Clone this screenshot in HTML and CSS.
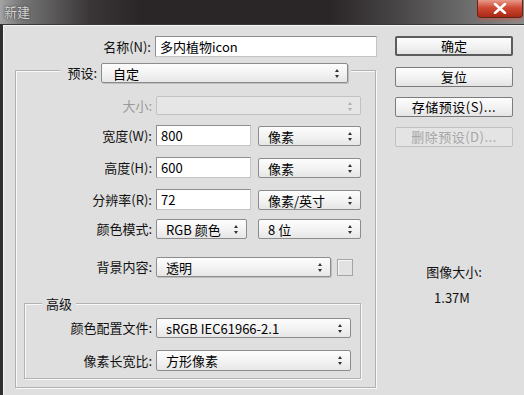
FILE: index.html
```html
<!DOCTYPE html>
<html lang="zh-CN">

<head>
    <meta charset="UTF-8">
    <title>新建</title>
    <link rel="stylesheet" href="styles.css">
</head>

<body>
    <div class="window">
        <div class="titlebar">
            <span class="title">新建</span>
            <span class="close-btn">
                <svg width="14" height="11" viewBox="0 0 14 11">
                    <path d="M2 1 L12 10 M12 1 L2 10" stroke="#fff" stroke-width="2.6" stroke-linecap="round" />
                </svg>
            </span>
        </div>
        <div class="dialog">
            <div class="left-col">
                <div class="name-row">
                    <label class="name-label">名称(N):</label>
                    <div class="input name-input">多内植物icon</div>
                </div>

                <div class="group">
                    <div class="preset-row">
                        <label class="preset-label">预设:</label>
                        <div class="select preset-select">自定<i class="arrows"></i></div>
                    </div>

                    <div class="row row-size">
                        <label class="label disabled">大小:</label>
                        <div class="select size-select is-disabled"><i class="arrows"></i></div>
                    </div>
                    <div class="row row-gap10">
                        <label class="label">宽度(W):</label>
                        <div class="input num-input">800</div>
                        <div class="select unit-select">像素<i class="arrows"></i></div>
                    </div>
                    <div class="row row-gap11">
                        <label class="label">高度(H):</label>
                        <div class="input num-input">600</div>
                        <div class="select unit-select">像素<i class="arrows"></i></div>
                    </div>
                    <div class="row row-gap11">
                        <label class="label">分辨率(R):</label>
                        <div class="input num-input res-input">72</div>
                        <div class="select unit-select">像素/英寸<i class="arrows"></i></div>
                    </div>
                    <div class="row row-gap9">
                        <label class="label">颜色模式:</label>
                        <div class="select mode-select">RGB&nbsp;颜色<i class="arrows"></i></div>
                        <div class="select unit-select bits-select">8&nbsp;位<i class="arrows"></i></div>
                    </div>
                    <div class="row row-bg">
                        <label class="label">背景内容:</label>
                        <div class="select bg-select">透明<i class="arrows"></i></div>
                        <div class="swatch"></div>
                    </div>

                    <div class="adv-group">
                        <div class="adv-title">高级</div>
                        <div class="row adv-row">
                            <label class="label adv-label">颜色配置文件:</label>
                            <div class="select adv-select">sRGB IEC61966-2.1<i class="arrows"></i></div>
                        </div>
                        <div class="row adv-row adv-row2">
                            <label class="label adv-label">像素长宽比:</label>
                            <div class="select adv-select">方形像素<i class="arrows"></i></div>
                        </div>
                    </div>
                </div>
            </div>

            <div class="right-col">
                <div class="btn btn-default">确定</div>
                <div class="btn btn-reset">复位</div>
                <div class="btn btn-save">存储预设(S)...</div>
                <div class="btn btn-save is-disabled">删除预设(D)...</div>
                <div class="size-title">图像大小:</div>
                <div class="size-value">1.37M</div>
            </div>
        </div>
    </div>
</body>

</html>
```

FILE: styles.css
```css
* {
    padding: 0;
    margin: 0;
    box-sizing: border-box;
}

body {
    font: 13px/18px "Noto Sans CJK SC", "Liberation Sans", sans-serif;
    color: #111;
    background: #dfdfdf;
}

.window {
    width: 524px;
    height: 395px;
    overflow: hidden;
}

/* title bar */
.titlebar {
    display: flex;
    justify-content: space-between;
    height: 24px;
    background: linear-gradient(90deg, #a4a4a4 0, #767676 22px, #3a3638 90px, #2a2628 140px, #2a2628 330px, #4a4749 400px, #6e6e6e 470px, #8c8c8c 524px);
}

.titlebar .title {
    padding: 3px 0 0 4px;
    color: #d4d4d4;
    font-size: 13px;
    text-shadow: 0 0 3px #555, 0 0 1px #333;
}

.titlebar .close-btn {
    display: flex;
    align-items: center;
    justify-content: center;
    margin-right: 1px;
    width: 46px;
    height: 18px;
    background: linear-gradient(#e89a8a, #cf4a34 45%, #a92814);
    border: 1px solid #5a2a22;
    border-top: 0;
    border-radius: 0 0 4px 4px;
    box-shadow: 0 2px 3px rgba(220, 80, 60, 0.5);
}

/* dialog body */
.dialog {
    display: flex;
    height: 371px;
    background: #dfdfdf;
    border-left: 3px solid #2f2f2f;
    border-top: 1px solid #3a3a3a;
    box-shadow: inset 1px 1px 0 #f4f4f4;
}

.left-col {
    width: 392px;
}

.name-row {
    display: flex;
    align-items: center;
    margin-top: 11px;
}

.name-label {
    width: 148px;
    text-align: right;
    margin-right: 4px;
}

.input {
    height: 21px;
    padding: 1px 0 0 4px;
    background: #fff;
    border: 1px solid #8e8e8e;
    border-right-color: #c4c4c4;
    border-bottom-color: #c4c4c4;
    color: #000;
}

.name-input {
    width: 222px;
}

.group {
    margin: 13px 0 0 12px;
    width: 361px;
    height: 318px;
    border: 1px solid #b2b2b2;
    box-shadow: inset 1px 1px 0 #f8f8f8, 1px 1px 0 #f8f8f8;
}

.preset-row {
    display: flex;
    align-items: center;
    margin: -8px 0 0 44px;
    width: 291px;
    background: #dfdfdf;
}

.preset-label {
    width: 37px;
    text-align: right;
    margin-right: 4px;
}

.select {
    position: relative;
    height: 20px;
    padding: 1px 0 0 9px;
    background: linear-gradient(#fdfdfd, #f1f1f1 60%, #e6e6e6);
    border: 1px solid #8c8c8c;
    border-radius: 2px;
    color: #000;
    white-space: nowrap;
}

/* up / down arrows */
.select .arrows {
    position: absolute;
    top: 5px;
    right: 7px;
    width: 5px;
    height: 9px;
}

.select .arrows::before,
.select .arrows::after {
    content: "";
    position: absolute;
    left: 0;
    border-left: 2.5px solid transparent;
    border-right: 2.5px solid transparent;
}

.select .arrows::before {
    top: 0;
    border-bottom: 3px solid #333;
}

.select .arrows::after {
    bottom: 0;
    border-top: 3px solid #333;
}

.preset-select {
    width: 247px;
    padding-left: 11px;
    box-shadow: 1px 1px 0 #bdbdbd;
}

.select.is-disabled {
    background: #e6e6e6;
    border-color: #c2c2c2;
}

.select.is-disabled .arrows {
    opacity: 0.3;
}

.row {
    display: flex;
    align-items: center;
}

.row .label {
    width: 136px;
    text-align: right;
    margin-right: 4px;
}

.label.disabled {
    color: #9a9a9a;
}

.row-size {
    margin-top: 13px;
}

.size-select {
    width: 205px;
    height: 19px;
}

.row-gap10 {
    margin-top: 10px;
}

.row-gap11 {
    margin-top: 11px;
}

.row-gap9 {
    margin-top: 9px;
}

.num-input {
    width: 95px;
}

.unit-select {
    margin-left: 7px;
    width: 103px;
}

.mode-select {
    width: 91px;
}

.bits-select {
    margin-left: 11px;
}

.row-bg {
    margin-top: 18px;
}

.bg-select {
    width: 175px;
    box-shadow: 1px 1px 0 #bdbdbd;
}

.swatch {
    margin-left: 6px;
    width: 16px;
    height: 17px;
    border: 1px solid #a4a4a4;
    background: #e2e2e2;
    box-shadow: inset 1px 1px 0 #f6f6f6;
}

/* advanced */
.adv-group {
    margin: 26px 0 0 8px;
    width: 337px;
    height: 76px;
    border: 1px solid #b2b2b2;
    box-shadow: inset 1px 1px 0 #f8f8f8, 1px 1px 0 #f8f8f8;
}

.adv-title {
    display: inline-block;
    margin: -9px 0 0 17px;
    padding: 0 4px;
    background: #dfdfdf;
    vertical-align: top;
}

.adv-row {
    margin-top: -4px;
}

.adv-row2 {
    margin-top: 12px;
}

.row .adv-label {
    width: 127px;
}

.adv-select {
    width: 195px;
}

.adv-row2 .adv-select {
    height: 21px;
}

/* right column */
.right-col {
    width: 118px;
}

.btn {
    height: 20px;
    margin-top: 10px;
    background: linear-gradient(#fdfdfd, #f2f2f2 55%, #e4e4e4);
    border: 1px solid #7c7c7c;
    border-radius: 2px;
    text-align: center;
    line-height: 18px;
    color: #000;
}

.btn-default {
    margin-top: 11px;
    border: 2px solid #5c5c5c;
    line-height: 16px;
}

.btn-reset {
    margin-top: 11px;
}

.btn-save {
    letter-spacing: 0.5px;
}

.btn.is-disabled {
    color: #a6a6a6;
    border-color: #c0c0c0;
    background: #e4e4e4;
}

.size-title {
    margin-top: 116px;
    text-align: center;
}

.size-value {
    margin-top: 8px;
    text-align: center;
    padding-right: 4px;
}
```
